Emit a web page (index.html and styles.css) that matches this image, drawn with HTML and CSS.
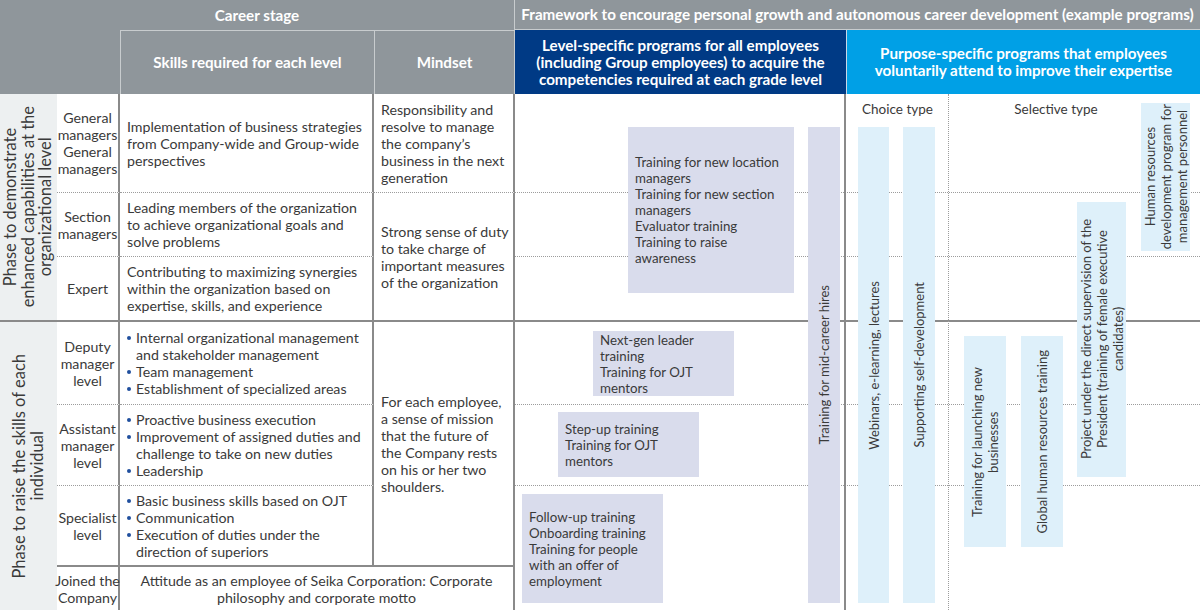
FILE: index.html
```html
<!DOCTYPE html>
<html lang="en">
<head>
<meta charset="utf-8">
<title>Career development framework</title>
<link rel="stylesheet" href="styles.css">
</head>
<body>
<div class="chart">
  <!-- header -->
  <div class="h h-career">Career stage</div>
  <div class="h h-blank"></div>
  <div class="h h-skills">Skills required for each level</div>
  <div class="h h-mindset">Mindset</div>
  <div class="h h-frame">Framework to encourage personal growth and autonomous career development (example programs)</div>
  <div class="h h-level">Level-specific programs for all employees<br>(including Group employees) to acquire the<br>competencies required at each grade level</div>
  <div class="h h-purpose">Purpose-specific programs that employees<br>voluntarily attend to improve their expertise</div>

  <!-- phases -->
  <div class="phase phase-org"><span>Phase to demonstrate<br>enhanced capabilities at the<br>organizational level</span></div>
  <div class="phase phase-ind"><span>Phase to raise the skills of each<br>individual</span></div>

  <!-- levels -->
  <div class="lvl r3 dot">General<br>managers<br>General<br>managers</div>
  <div class="lvl r4 dot">Section<br>managers</div>
  <div class="lvl r5 solid">Expert</div>
  <div class="lvl r6 dot">Deputy<br>manager<br>level</div>
  <div class="lvl r7 dot">Assistant<br>manager<br>level</div>
  <div class="lvl r8 solid">Specialist<br>level</div>
  <div class="lvl r9">Joined the<br>Company</div>

  <!-- skills -->
  <div class="sk r3 dot"><p>Implementation of business strategies<br>from Company-wide and Group-wide<br>perspectives</p></div>
  <div class="sk r4 dot"><p>Leading members of the organization<br>to achieve organizational goals and<br>solve problems</p></div>
  <div class="sk r5 solid"><p>Contributing to maximizing synergies<br>within the organization based on<br>expertise, skills, and experience</p></div>
  <div class="sk r6 dot">
    <ul>
      <li>Internal organizational management<br>and stakeholder management</li>
      <li>Team management</li>
      <li>Establishment of specialized areas</li>
    </ul>
  </div>
  <div class="sk r7 dot">
    <ul>
      <li>Proactive business execution</li>
      <li>Improvement of assigned duties and<br>challenge to take on new duties</li>
      <li>Leadership</li>
    </ul>
  </div>
  <div class="sk r8 solid">
    <ul>
      <li>Basic business skills based on OJT</li>
      <li>Communication</li>
      <li>Execution of duties under the<br>direction of superiors</li>
    </ul>
  </div>

  <!-- mindset -->
  <div class="md md-1 dot"><p>Responsibility and<br>resolve to manage<br>the company’s<br>business in the next<br>generation</p></div>
  <div class="md md-2 solid"><p>Strong sense of duty<br>to take charge of<br>important measures<br>of the organization</p></div>
  <div class="md md-3 solid"><p>For each employee,<br>a sense of mission<br>that the future of<br>the Company rests<br>on his or her two<br>shoulders.</p></div>

  <div class="joined">Attitude as an employee of Seika Corporation: Corporate<br>philosophy and corporate motto</div>

  <!-- right area grid lines -->
  <div class="rl r3 dot"></div>
  <div class="rl r4 dot"></div>
  <div class="rl r5 solid"></div>
  <div class="rl r6 dot"></div>
  <div class="rl r7 dot"></div>
  <div class="rc5"></div>
  <div class="rc6"></div>

  <!-- sub labels -->
  <div class="lab lab-choice">Choice type</div>
  <div class="lab lab-select">Selective type</div>

  <!-- level-specific programs -->
  <div class="bx bx-mgr">Training for new location<br>managers<br>Training for new section<br>managers<br>Evaluator training<br>Training to raise<br>awareness</div>
  <div class="bx bx-next">Next-gen leader<br>training<br>Training for OJT<br>mentors</div>
  <div class="bx bx-step">Step-up training<br>Training for OJT<br>mentors</div>
  <div class="bx bx-follow">Follow-up training<br>Onboarding training<br>Training for people<br>with an offer of<br>employment</div>
  <div class="vb vb-mid"><span>Training for mid-career hires</span></div>

  <!-- purpose-specific programs -->
  <div class="vb lt vb-web"><span>Webinars, e-learning, lectures</span></div>
  <div class="vb lt vb-self"><span>Supporting self-development</span></div>
  <div class="vb lt vb-launch"><span>Training for launching new<br>businesses</span></div>
  <div class="vb lt vb-global"><span>Global human resources training</span></div>
  <div class="vb lt vb-proj"><span>Project under the direct supervision of the<br>President (training of female executive<br>candidates)</span></div>
  <div class="vb lt vb-hr"><span>Human resources<br>development program for<br>management personnel</span></div>
</div>
</body>
</html>
```

FILE: styles.css
```css
* {
  box-sizing: border-box;
  margin: 0;
  padding: 0;
}

html,
body {
  width: 1200px;
  height: 610px;
  overflow: hidden;
  background: #ffffff;
}

body {
  font-family: Lato, "Open Sans", sans-serif;
  font-size: 14.2px;
  line-height: 17px;
  color: #3a3a3a;
}

.chart {
  display: grid;
  grid-template-columns: 57px 63px 254px 141px 331px 103px 251px;
  grid-template-rows: 30px 64px 99px 64px 65px 83px 81px 81px 43px;
  width: 1200px;
  height: 610px;
}

/* ---------- header ---------- */
.h {
  display: flex;
  align-items: center;
  justify-content: center;
  text-align: center;
  color: #ffffff;
  font-weight: 700;
  font-size: 15.2px;
  line-height: 17px;
  background: #8f969b;
  white-space: nowrap;
}

.h-career {
  grid-column: 1 / 5;
  grid-row: 1;
  border-right: 1px solid #c8ccce;
}

.h-blank {
  grid-column: 1 / 3;
  grid-row: 2;
}

.h-skills {
  grid-column: 3;
  grid-row: 2;
  border-top: 1px solid #c8ccce;
  border-left: 1px solid #c8ccce;
}

.h-mindset {
  grid-column: 4;
  grid-row: 2;
  border-top: 1px solid #c8ccce;
  border-left: 1px solid #c8ccce;
  border-right: 1px solid #c8ccce;
}

.h-frame {
  grid-column: 5 / 8;
  grid-row: 1;
  border-bottom: 1px solid #c8ccce;
}

.h-level {
  grid-column: 5;
  grid-row: 2;
  background: #003a85;
}

.h-purpose {
  grid-column: 6 / 8;
  grid-row: 2;
  background: #00a0e6;
  border-left: 1px solid #c8d8e8;
}

/* ---------- rows ---------- */
.r3 { grid-row: 3; }
.r4 { grid-row: 4; }
.r5 { grid-row: 5; }
.r6 { grid-row: 6; }
.r7 { grid-row: 7; }
.r8 { grid-row: 8; }
.r9 { grid-row: 9; }

.dot {
  border-bottom: 1px dotted #9c9c9c;
}

.solid {
  border-bottom: 2px solid #8a8a8a;
}

/* ---------- phase column ---------- */
.phase {
  grid-column: 1;
  display: flex;
  align-items: center;
  justify-content: center;
  background: #edf0f1;
  font-size: 16.5px;
  line-height: 17.5px;
  text-align: center;
}

.phase span {
  writing-mode: vertical-rl;
  transform: rotate(180deg);
  white-space: nowrap;
}

.phase-org {
  grid-row: 3 / 6;
  border-bottom: 2px solid #8a8a8a;
}

.phase-ind {
  grid-row: 6 / 10;
}

/* ---------- level column ---------- */
.lvl {
  grid-column: 2;
  display: flex;
  align-items: center;
  justify-content: center;
  text-align: center;
  border-right: 2px solid #8a8a8a;
  white-space: nowrap;
}

/* ---------- skills column ---------- */
.sk {
  grid-column: 3;
  display: flex;
  align-items: center;
  padding-left: 7px;
  border-right: 2px solid #8a8a8a;
  white-space: nowrap;
}

.sk ul {
  list-style: none;
}

.sk li {
  padding-left: 9px;
  text-indent: -9px;
}

.sk li::before {
  content: "";
  display: inline-block;
  width: 4px;
  height: 4px;
  margin-right: 5px;
  border-radius: 50%;
  background: #1f4f9e;
  vertical-align: 3px;
}

/* ---------- mindset column ---------- */
.md {
  grid-column: 4;
  display: flex;
  align-items: center;
  padding-left: 7px;
  border-right: 2px solid #8a8a8a;
  white-space: nowrap;
}

.md-1 { grid-row: 3; }
.md-2 { grid-row: 4 / 6; }
.md-3 { grid-row: 6 / 9; }

.joined {
  grid-column: 3 / 5;
  grid-row: 9;
  display: flex;
  align-items: center;
  justify-content: center;
  text-align: center;
  border-right: 2px solid #8a8a8a;
  white-space: nowrap;
}

/* ---------- right area lines ---------- */
.rl {
  grid-column: 5 / 8;
}

.rc5 {
  grid-column: 5;
  grid-row: 3 / 10;
  border-right: 2px solid #8a8a8a;
}

.rc6 {
  grid-column: 6;
  grid-row: 3 / 10;
  border-right: 1px dotted #9c9c9c;
}

.lab {
  grid-row: 3;
  align-self: start;
  justify-self: center;
  margin-top: 7px;
  font-size: 13.5px;
  background: #ffffff;
}

.lab-choice {
  grid-column: 6;
}

.lab-select {
  grid-column: 7;
  margin-right: 37px;
}

/* ---------- program boxes ---------- */
.bx {
  grid-column: 5;
  align-self: start;
  justify-self: start;
  display: flex;
  align-items: center;
  padding-left: 7px;
  background: #d9dcec;
  font-size: 13.3px;
  line-height: 16px;
  white-space: nowrap;
}

.bx-mgr {
  grid-row: 3 / 6;
  width: 166px;
  height: 166px;
  margin: 33px 0 0 113px;
}

.bx-next {
  grid-row: 6;
  width: 141px;
  height: 65px;
  margin: 9px 0 0 78px;
}

.bx-step {
  grid-row: 7;
  width: 141px;
  height: 65px;
  margin: 7px 0 0 43px;
}

.bx-follow {
  grid-row: 8 / 10;
  width: 141px;
  height: 109px;
  margin: 8px 0 0 7px;
}

.vb {
  align-self: start;
  justify-self: start;
  display: flex;
  align-items: center;
  justify-content: center;
  background: #d9dcec;
  font-size: 13px;
  line-height: 16px;
}

.vb span {
  writing-mode: vertical-rl;
  transform: rotate(180deg);
  text-align: center;
  white-space: nowrap;
}

.vb.lt {
  background: #def0fa;
}

.vb-mid {
  grid-column: 5;
  grid-row: 3 / 10;
  width: 32px;
  height: 476px;
  margin: 33px 0 0 293px;
}

.vb-web {
  grid-column: 6;
  grid-row: 3 / 10;
  width: 31px;
  height: 476px;
  margin: 33px 0 0 12px;
}

.vb-self {
  grid-column: 6;
  grid-row: 3 / 10;
  width: 32px;
  height: 476px;
  margin: 33px 0 0 57px;
}

.vb-launch {
  grid-column: 7;
  grid-row: 6 / 10;
  width: 42px;
  height: 211px;
  margin: 14px 0 0 15px;
}

.vb-global {
  grid-column: 7;
  grid-row: 6 / 10;
  width: 42px;
  height: 211px;
  margin: 14px 0 0 72px;
}

.vb-proj {
  grid-column: 7;
  grid-row: 4 / 10;
  width: 49px;
  height: 275px;
  margin: 9px 0 0 128px;
}

.vb-hr {
  grid-column: 7;
  grid-row: 3 / 10;
  width: 49px;
  height: 148px;
  margin: 9px 0 0 192px;
}
```
